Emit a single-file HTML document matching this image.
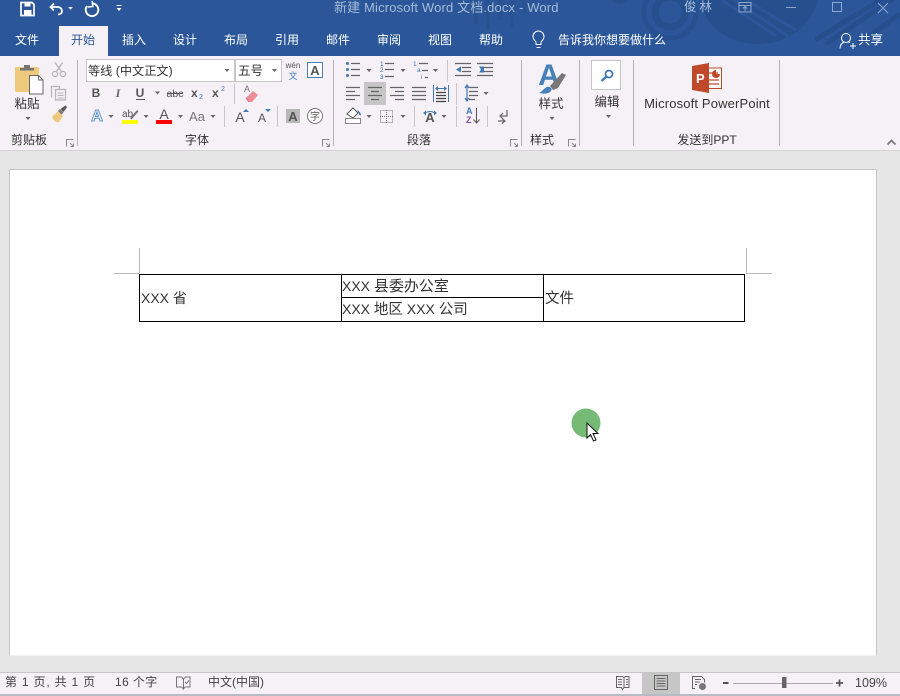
<!DOCTYPE html>
<html lang="zh"><head><meta charset="utf-8"><title>Word</title>
<style>
html,body{margin:0;padding:0;width:900px;height:696px;overflow:hidden;background:#e6e6e6}
svg{display:block;position:absolute;left:0;top:0}
text{font-family:"Liberation Sans","Noto Sans CJK SC",sans-serif;font-size:12px;fill:#333}
.m{text-anchor:middle}
.car{fill:#666}
.ln{stroke:#666;stroke-width:1;fill:none}
.sep{stroke:#c8c6c8;stroke-width:1}
.gs{stroke:#b4b2b4;stroke-width:1}
</style></head><body>
<svg width="900" height="696" viewBox="0 0 900 696" xmlns="http://www.w3.org/2000/svg">
<defs>
<clipPath id="tb"><rect x="0" y="0" width="900" height="56"/></clipPath>
</defs>
<!-- backgrounds -->
<rect width="900" height="696" fill="#e6e6e6"/>
<rect width="900" height="56" fill="#2b579a"/>
<rect y="56" width="900" height="94" fill="#f5f1f6"/>
<rect y="150" width="900" height="1" fill="#d4d2d4"/>
<!-- title decoration -->
<g clip-path="url(#tb)" fill="none" stroke="#264f8d">
<circle cx="670" cy="12" r="15" stroke-width="7"/>
<circle cx="670" cy="12" r="26" stroke-width="5" opacity=".8"/>
<circle cx="620" cy="-8" r="12" fill="#264f8d" stroke="none"/>
<path d="M700 0 C705 28 730 44 758 44 C790 44 812 25 818 0 Z" fill="#264f8d" stroke="none"/>
<path d="M722 0 L776 36 M734 0 L788 36 M746 0 L796 30" stroke="#2b579a" stroke-width="3"/>
<path d="M900 -6 L826 44 M890 -6 L815 40 M900 14 L858 44" stroke-width="5"/>
<path d="M476 0v24M488 0v30M500 0v20M512 0v28M524 0v14" stroke-width="4" opacity=".55"/>
</g>
<!-- QAT -->
<g fill="none" stroke="#fff">
<path d="M21 2.500h11l2 2v11h-13z" stroke-width="1.700"/>
<rect x="24.500" y="2.500" width="6" height="4" fill="#fff" stroke="none"/>
<rect x="24" y="10" width="7.500" height="5.500" fill="#fff" stroke="none"/>
<path d="M54 3.500L50.500 7l3.500 3.500" stroke-width="1.800"/>
<path d="M51 7h6.500c3 0 4.500 2 4.500 4s-1.500 3.500-4 3.500" stroke-width="1.800"/>
<path d="M92.500 3.500a6.300 6.300 0 1 1-5.500 2.500" stroke-width="1.900"/>
<path d="M92.500 1v5.500h-5" stroke-width="1.500" transform="rotate(-6 92 4)"/>
<path d="M116.500 5.500h5" stroke-width="1"/>
</g>
<path d="M68 7h5l-2.500 2.800z" fill="#dfe6f0"/>
<path d="M116.500 8h5l-2.500 3z" fill="#fff"/>
<!-- title -->
<text x="334" y="12" style="fill:#a7bbd8;font-size:13px;letter-spacing:.15px">新建 Microsoft Word 文档.docx  -  Word</text>
<text x="684" y="11" style="fill:#a7bbd8;font-size:12.500px;letter-spacing:3px">俊林</text>
<g fill="none" stroke="#8ea8cd" stroke-width="1">
<rect x="739" y="2.500" width="12" height="9.500"/><path d="M739 5.500h12M745 11v-4M743 8.500l2-2 2 2"/>
<path d="M786 7.500h10"/>
<rect x="832.500" y="2.500" width="9" height="9"/>
<path d="M878 3l10 10M888 3l-10 10"/>
</g>
<!-- tabs -->
<rect x="59" y="26" width="49" height="30" fill="#f5f1f6"/>
<text class="m" x="27" y="44" style="fill:#fff">文件</text>
<text class="m" x="83" y="44" style="fill:#2b579a">开始</text>
<text class="m" x="134" y="44" style="fill:#fff">插入</text>
<text class="m" x="185" y="44" style="fill:#fff">设计</text>
<text class="m" x="236" y="44" style="fill:#fff">布局</text>
<text class="m" x="287" y="44" style="fill:#fff">引用</text>
<text class="m" x="338" y="44" style="fill:#fff">邮件</text>
<text class="m" x="389" y="44" style="fill:#fff">审阅</text>
<text class="m" x="440" y="44" style="fill:#fff">视图</text>
<text class="m" x="491" y="44" style="fill:#fff">帮助</text>
<text x="558" y="44" style="fill:#fff">告诉我你想要做什么</text>
<text x="858" y="44" style="fill:#fff;font-size:12.500px">共享</text>
<g fill="none" stroke="#fff" stroke-width="1">
<path d="M536 44.500v-2c0-1.500-3-2.500-3-6a5.500 5.500 0 0 1 11 0c0 3.500-3 4.500-3 6v2z"/><path d="M536.500 47.500h4"/>
<circle cx="846" cy="38" r="4.500"/><path d="M840 48.500c0-4 2-5.500 4-6.500M848 41.500l2 1"/><path d="M850 46h6M853 43v6"/>
</g>
<!-- separators -->
<g class="gs">
<path d="M77.500 60v86M333.500 60v86M521.500 60v86M579.500 60v86M633.500 60v86M779.500 60v86"/>
</g>
<g class="sep">
<path d="M234.500 84v20M224.500 106v21M277.500 106v21M447.500 60v22M456.500 83v22M414.500 106v21M456.500 106v21M487.500 106v21"/>
</g>
<!-- clipboard group -->
<rect x="15" y="67" width="24" height="25" rx="1.500" fill="#f0ca7c"/>
<path d="M20 70v-2h4v-3h6v3h4v2.500H20z" fill="#767676"/>
<path d="M29.500 75.500h9l4.500 4.500v14H29.500z" fill="#fff" stroke="#666"/>
<path d="M38.500 75.500v4.500h4.500" fill="none" stroke="#666"/>
<text class="m" x="27" y="108" style="font-size:12.500px">粘贴</text>
<path class="car" d="M25.500 117h5l-2.500 3z"/>
<text class="m" x="29" y="144">剪贴板</text>
<g fill="none" stroke="#8a8a8a"><path d="M66.500 146.500v-7h7"/><path d="M70 143l3 3M73.500 143.500v3h-3"/></g>
<g fill="none" stroke="#b5b5b5" stroke-width="1.300">
<circle cx="55" cy="74" r="2.600"/><circle cx="63" cy="74" r="2.600"/><path d="M56.500 71.500L62.500 62.500M61.500 71.500L55 62.500"/>
<path d="M51.500 97.500v-11h8v3"/><rect x="55.500" y="89.500" width="10" height="10.500" fill="#f5f1f6"/><path d="M57.500 93h6M57.500 95.500h6M57.500 98h6" stroke-width="1"/>
</g>
<path d="M52 117l6-6 5 5-4 6c-3 1-5-1-7-5z" fill="#edc87e"/>
<path d="M58 111l2-2 3.500 3.500-2 2z" fill="#777"/><path d="M60.500 109l5-3.500 1.500 1.500-3.500 5z" fill="#555"/>
<!-- font group -->
<rect x="86.500" y="59.500" width="148" height="22" fill="#fff" stroke="#c6c6c6"/>
<rect x="235.500" y="59.500" width="46" height="22" fill="#fff" stroke="#c6c6c6"/>
<text x="88" y="75" style="font-size:12.200px">等线 (中文正文)</text>
<text x="238" y="75" style="font-size:12.500px">五号</text>
<path class="car" d="M224.500 69h5l-2.500 3zM272 69h5l-2.500 3z"/>
<text class="m" x="293" y="68" style="font-size:8px;fill:#555">wén</text>
<text class="m" x="293" y="79" style="font-size:9px;fill:#3f78b5">文</text>
<rect x="307.500" y="62.500" width="15" height="15" fill="#fff" stroke="#4a80b8"/>
<text class="m" x="315" y="75" style="font-size:13px;font-weight:bold;fill:#555">A</text>
<text class="m" x="96" y="97" style="font-size:12px;font-weight:bold;fill:#555">B</text>
<text class="m" x="118" y="97" style="font-size:12px;font-style:italic;font-weight:bold;fill:#666;font-family:'Liberation Serif',serif">I</text>
<text class="m" x="140" y="97" style="font-size:12px;font-weight:bold;fill:#555">U</text>
<path d="M136 99.500h9" stroke="#555"/>
<path class="car" d="M155 91.500h5l-2.500 3z"/>
<text class="m" x="175" y="97" style="font-size:10.500px;fill:#555">abc</text><path d="M167 93.500h16" stroke="#555"/>
<text x="191" y="97" style="font-size:12px;font-weight:bold;fill:#555">x</text><text x="199" y="99" style="font-size:7px;fill:#3f78b5">2</text>
<text x="212" y="97" style="font-size:12px;font-weight:bold;fill:#555">x</text><text x="221" y="91" style="font-size:7px;fill:#3f78b5">2</text>
<text x="244" y="92" style="font-size:9px;fill:#777">A</text>
<path d="M246 98l7-7 5 4-6 7h-3z" fill="#ee8d97"/><path d="M246 98l3 4" stroke="#d86a76"/>
<text class="m" x="97" y="121" style="font-size:16px;font-weight:bold;fill:#fff;stroke:#5b93cc;stroke-width:1">A</text>
<path class="car" d="M108.500 115h5l-2.500 3zM143.500 115h5l-2.500 3zM178 115h5l-2.500 3zM210.500 115h5l-2.500 3z"/>
<text x="122" y="117" style="font-size:10px;fill:#555">ab</text>
<path d="M130 118l7-8 1.500 1.500-7 8z" fill="#777"/>
<rect x="122" y="120" width="16" height="4" fill="#ffff00"/>
<text class="m" x="164" y="119" style="font-size:14px;fill:#555">A</text>
<rect x="156" y="120" width="16" height="4" fill="#ff0000"/>
<text class="m" x="197" y="121" style="font-size:13px;fill:#777">Aa</text>
<text class="m" x="240" y="122" style="font-size:14px;fill:#555">A</text><path d="M243 112h6l-3-3z" fill="#3f78b5"/>
<text class="m" x="262" y="122" style="font-size:12px;fill:#555">A</text><path d="M265 109h6l-3 3z" fill="#3f78b5"/>
<rect x="286" y="109" width="14" height="14" fill="#b8b8b8"/>
<text class="m" x="293" y="121" style="font-size:13px;font-weight:bold;fill:#555">A</text>
<circle cx="315" cy="116" r="7.500" fill="#fff" stroke="#777"/>
<text class="m" x="315" y="120" style="font-size:10px;fill:#555">字</text>
<text class="m" x="197" y="144">字体</text>
<g fill="none" stroke="#8a8a8a"><path d="M322.500 146.500v-7h7M326 143l3 3M329.500 143.500v3h-3"/></g>
<!-- paragraph group -->
<g class="ln" style="stroke-width:1.200">
<path d="M351 63.500h9M351 69.500h9M351 75.500h9"/>
<path d="M385 63.500h9M385 69.500h9M385 76.500h9"/>
<path d="M419 63.500h9M422 70.500h6M425 77.500h3"/>
</g>
<g fill="#3f78b5"><circle cx="347.500" cy="63.500" r="1.500"/><circle cx="347.500" cy="69.500" r="1.500"/><circle cx="347.500" cy="75.500" r="1.500"/></g>
<text x="380" y="66" style="font-size:6.500px;fill:#3f78b5">1</text><text x="380" y="72" style="font-size:6.500px;fill:#3f78b5">2</text><text x="380" y="79" style="font-size:6.500px;fill:#3f78b5">3</text>
<text x="413" y="66" style="font-size:6.500px;fill:#3f78b5">1</text><text x="417" y="72" style="font-size:6.500px;fill:#3f78b5">a</text><text x="421" y="79" style="font-size:6.500px;fill:#3f78b5">i</text>
<path class="car" d="M366.500 69h5l-2.500 3zM400.500 69h5l-2.500 3zM433 69h5l-2.500 3zM483.500 92h5l-2.500 3zM366.500 115h5l-2.500 3zM400.500 115h5l-2.500 3zM441.500 115h5l-2.500 3z"/>
<g class="ln" style="stroke-width:1.200">
<path d="M462 67.500h9M462 71.500h9M455 63.500h16M455 75.500h16"/>
<path d="M477 63.500h16M477 75.500h16M484 67.500h9M484 71.500h9"/>
</g>
<path d="M461 66.500l-5 3 5 3zM460 69.500h3M479 66.500h5v6h-5l2-3z" fill="#3f78b5"/>
<rect x="364" y="82" width="22" height="23" fill="#c6c6c6"/>
<g class="ln" style="stroke-width:1.200">
<path d="M346 87.500h14M346 91.500h9M346 95.500h14M346 99.500h9"/>
<path d="M368 87.500h14M371 91.500h8M368 95.500h14M371 99.500h8"/>
<path d="M390 87.500h14M395 91.500h9M390 95.500h14M395 99.500h9"/>
<path d="M412 87.500h14M412 91.500h14M412 95.500h14M412 99.500h14"/>
<path d="M436 92.500h10M436 95.500h10M436 98.500h10M436 101.500h10" stroke="#444"/>
<path d="M469 87.500h9M469 91.500h9M469 95.500h9M469 99.500h6"/>
</g>
<path d="M433.500 85v17M448.500 85v17M437 88.500h8" fill="none" stroke="#3f78b5"/>
<path d="M435 88.500l3-2.500v5zM447 88.500l-3-2.500v5z" fill="#3f78b5"/>
<path d="M467 86v14M465 88l2-3 2 3M465 98l2 3 2-3" fill="none" stroke="#3f78b5" stroke-width="1.200"/>
<path d="M345.500 118.500h15v5h-15z" fill="#fff" stroke="#888"/>
<path d="M347 114l6-6 5 5-5 5z" fill="#fff" stroke="#555"/>
<path d="M357 110c2 1 4 3 4 5-1 1-2 0-2-1z" fill="#3f78b5"/>
<g stroke="#777" stroke-dasharray="1 1" fill="none"><path d="M380.500 110.500h12v12h-12zM386.500 110v13M380 116.500h13"/></g>
<text class="m" x="430" y="122" style="font-size:13px;font-weight:bold;fill:#555">A</text>
<path d="M423 113l3-2.500v5zM437 113l-3-2.500v5z" fill="#3f78b5"/>
<path d="M425 113c3-2 7-2 10 0" stroke="#3f78b5" fill="none"/>
<text x="466" y="114" style="font-size:9px;font-weight:bold;fill:#3f78b5">A</text>
<text x="466" y="123" style="font-size:9px;font-weight:bold;fill:#8e4fa8">Z</text>
<path d="M476.500 108v14M473.500 119.500l3 3.500 3-3.500" stroke="#555" fill="none"/>
<path d="M507 110v6h-7M503 113l-3 3 3 3M498 121h7M502 118.500l3 2.500-3 2.500" stroke="#666" fill="none" stroke-width="1.200"/>
<text class="m" x="419" y="144">段落</text>
<g fill="none" stroke="#8a8a8a"><path d="M510.500 146.500v-7h7M514 143l3 3M517.500 143.500v3h-3"/></g>
<!-- styles -->
<text class="m" x="549" y="85" style="font-size:30px;font-weight:bold;fill:#4a80b8">A</text>
<path d="M553 90l-3-4 12-13 4 2-8 13z" fill="#777"/>
<path d="M539 93c3-1 5-5 8-6 3-1 6 2 4 4-2 3-8 3-12 2z" fill="#4a80b8"/>
<text class="m" x="551" y="108" style="font-size:12.500px">样式</text>
<path class="car" d="M549.500 117h5l-2.500 3z"/>
<text class="m" x="542" y="144">样式</text>
<g fill="none" stroke="#8a8a8a"><path d="M568.500 146.500v-7h7M572 143l3 3M575.500 143.500v3h-3"/></g>
<!-- edit -->
<rect x="591.500" y="60.500" width="29" height="29" fill="#fff" stroke="#c6c6c6"/>
<circle cx="609" cy="74" r="3.500" fill="none" stroke="#3f78b5" stroke-width="1.700"/>
<path d="M606.500 76.500l-5 4.500" stroke="#3f78b5" stroke-width="2.200"/>
<text class="m" x="607" y="106" style="font-size:12.500px">编辑</text>
<path class="car" d="M606 115h5l-2.500 3z"/>
<!-- ppt -->
<path d="M700 68h21.500v20.500H700z" fill="#fff" stroke="#c0492a"/>
<path d="M709 73h9M709 80h10M709 84h10" stroke="#c0492a" stroke-width="1.200"/>
<path d="M716 70a4 4 0 1 0 4 4h-4z" fill="#c0492a"/>
<path d="M692 66l17-3v30l-17-3z" fill="#c0492a"/>
<text x="696" y="83" style="font-size:13px;font-weight:bold;fill:#fff">P</text>
<text class="m" x="707" y="108" style="font-size:13px;letter-spacing:.15px">Microsoft PowerPoint</text>
<text class="m" x="707" y="144">发送到PPT</text>
<path d="M887.500 144.500l4-4 4 4" fill="none" stroke="#777" stroke-width="1.700"/>
<!-- page -->
<rect x="10" y="169.500" width="866" height="486" fill="#fff"/>
<path d="M9.500 655.500v-486h867v486" fill="none" stroke="#c6c6c6"/>
<path d="M139.500 248v25M114 273.500h25M746.500 248v25M746 273.500h26" stroke="#b8b8b8" fill="none"/>
<g fill="none" stroke="#000" stroke-width="1">
<rect x="139.500" y="274.500" width="605" height="47"/>
<path d="M341.500 274.500v47M543.500 274.500v47M341.500 297.500h202"/>
</g>
<text x="141" y="303" style="font-size:14px;fill:#333">XXX 省</text>
<text x="342" y="291" style="font-size:14px;fill:#333">XXX <tspan style="font-size:15px">县委办公室</tspan></text>
<text x="342" y="314" style="font-size:14px;fill:#333">XXX <tspan style="font-size:14.500px">地区</tspan> XXX <tspan style="font-size:14.500px">公司</tspan></text>
<text x="545" y="303" style="font-size:14.500px;fill:#333">文件</text>
<!-- cursor -->
<circle cx="586" cy="423" r="14.500" fill="#75bb75"/>
<path d="M587 423v15l3.500-3.500 3 6.500 2.500-1-3-6.500h5z" fill="#fff" stroke="#111" stroke-width="1"/>
<!-- status -->
<rect y="672" width="900" height="22" fill="#f5f1f6"/>
<rect y="672" width="900" height="1" fill="#c6c6c6"/>
<rect y="694" width="900" height="2" fill="#b8bcc2"/>
<text x="5" y="686" style="fill:#444;letter-spacing:.8px">第 1 页, 共 1 页</text>
<text x="115" y="686" style="fill:#444;letter-spacing:.4px">16 个字</text>
<path d="M176.500 677h5l2 2v10l-2-2h-5zM183.500 679l2-2h4.500v10h-5l-1.500 2M185 682l1.500 1.500 2.500-3" fill="none" stroke="#777"/>
<text x="208" y="686" style="fill:#444">中文(中国)</text>
<rect x="642" y="673" width="38" height="21" fill="#c6c6c6"/>
<g fill="none" stroke="#666">
<path d="M616.500 676.500h6l1.500 1 1.500-1h3.500v11h-5l-1.500 2-1-2h-5zM624 678v10M618 679.500h4M618 682h4M618 684.500h4M626 679.500h2M626 682h2M626 684.500h2"/>
<rect x="654.500" y="675.500" width="13" height="14"/><path d="M656.500 678.500h9M656.500 681h9M656.500 683.500h9M656.500 686h9"/>
<path d="M695 688.500h-2.500v-12h9l3 3v3M695 679.500h6M695 682h5M695 684.500h2"/>
</g>
<circle cx="702.500" cy="686.500" r="3.500" fill="#777"/>
<path d="M723 683h5.500" stroke="#555" stroke-width="2"/>
<path d="M733 683.500h100" stroke="#aaa"/>
<rect x="782" y="677" width="4.500" height="11" fill="#666"/>
<path d="M836 683h7M839.500 679.500v7" stroke="#555" stroke-width="1.700"/>
<text x="855" y="687" style="fill:#444;font-size:12.500px">109%</text>
</svg>
</body></html>
